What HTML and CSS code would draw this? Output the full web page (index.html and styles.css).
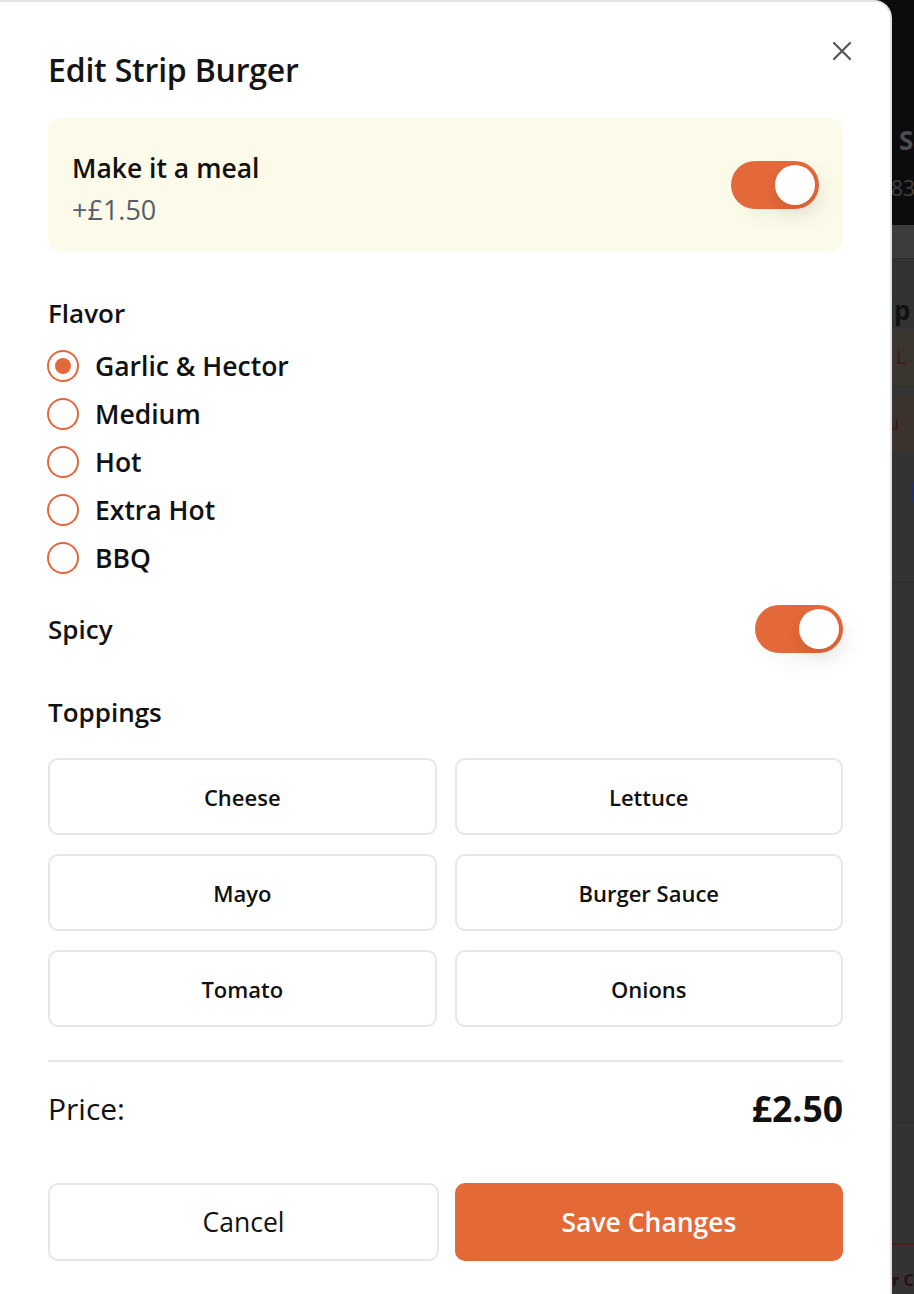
FILE: index.html
```html
<!DOCTYPE html>
<html lang="en">
<head>
<meta charset="utf-8">
<title>Edit Strip Burger</title>
<link rel="stylesheet" href="styles.css">
</head>
<body>
<div class="page" aria-hidden="true">
  <header class="page-header">
    <div class="brand">S</div>
    <div class="phone">83</div>
  </header>
  <div class="page-band"></div>
  <section class="page-item">
    <div class="item-name">ip</div>
    <div class="tag tag-a">L</div>
    <div class="tag tag-b">au</div>
    <div class="check"></div>
  </section>
  <section class="page-summary"></section>
  <footer class="page-footer">r C</footer>
</div>

<div class="modal" role="dialog" aria-labelledby="modal-title">
  <button class="close" aria-label="Close">
    <svg width="20" height="20" viewBox="0 0 20 20"><path d="M2 2L18 18M18 2L2 18" stroke="#555" stroke-width="2.2" stroke-linecap="round"/></svg>
  </button>
  <h2 id="modal-title" class="title">Edit Strip Burger</h2>

  <div class="meal">
    <div class="meal-text">
      <div class="meal-name">Make it a meal</div>
      <div class="meal-price">+£1.50</div>
    </div>
    <span class="toggle on"><span class="knob"></span></span>
  </div>

  <div class="label flavor-label">Flavor</div>
  <div class="radios">
    <label class="radio"><span class="dot checked"></span>Garlic &amp; Hector</label>
    <label class="radio"><span class="dot"></span>Medium</label>
    <label class="radio"><span class="dot"></span>Hot</label>
    <label class="radio"><span class="dot"></span>Extra Hot</label>
    <label class="radio"><span class="dot"></span>BBQ</label>
  </div>

  <div class="spicy-row">
    <span class="label">Spicy</span>
    <span class="toggle on"><span class="knob"></span></span>
  </div>

  <div class="label toppings-label">Toppings</div>
  <div class="toppings">
    <button class="topping">Cheese</button>
    <button class="topping">Lettuce</button>
    <button class="topping">Mayo</button>
    <button class="topping">Burger Sauce</button>
    <button class="topping">Tomato</button>
    <button class="topping">Onions</button>
  </div>

  <hr class="divider">

  <div class="price-row">
    <span class="price-label">Price:</span>
    <span class="price-value">£2.50</span>
  </div>

  <div class="actions">
    <button class="btn btn-cancel">Cancel</button>
    <button class="btn btn-save">Save Changes</button>
  </div>
</div>
</body>
</html>
```

FILE: styles.css
```css
* { box-sizing: border-box; }

html, body {
  margin: 0;
  padding: 0;
}

body {
  width: 914px;
  height: 1294px;
  overflow: hidden;
  background: #333333;
  font-family: "Open Sans", "Noto Sans", sans-serif;
  color: #111111;
  position: relative;
}

/* ---------- background page (dimmed) ---------- */
.page {
  width: 914px;
}

.page-header {
  height: 225px;
  background: #0c0c0e;
  padding: 124px 0 0 899px;
  white-space: nowrap;
  color: #4d4d4f;
}

.brand {
  font-size: 26px;
  font-weight: 700;
  line-height: 32px;
}

.phone {
  font-size: 21px;
  line-height: 28px;
  margin-top: 18px;
  margin-left: -8px;
  color: #404042;
}

.page-band {
  height: 34px;
  background: #3c3c3c;
  border-bottom: 1px solid #2c2c2c;
}

.page-item {
  height: 324px;
  padding: 34px 0 0 886px;
  white-space: nowrap;
  border-bottom: 1px solid #2a2a2a;
}

.item-name {
  font-size: 26px;
  font-weight: 700;
  color: #111111;
  line-height: 34px;
}

.tag {
  height: 56px;
  line-height: 56px;
  font-size: 20px;
  margin-left: -10px;
}

.tag-a {
  margin-top: 2px;
  background: #3b3530;
  color: #3a1a10;
  padding-left: 20px;
}

.tag-b {
  margin-top: 10px;
  background: #3a332e;
  color: #3a1a10;
  padding-left: 0;
}

.check {
  width: 22px;
  height: 22px;
  border: 2px solid #25305a;
  border-radius: 3px;
  margin: 30px 0 0 26px;
}

.page-summary {
  height: 540px;
  border-bottom: 1px solid #2a2a2a;
}

.page-footer {
  margin-top: 120px;
  border-top: 2px solid #4a1e1e;
  padding: 24px 0 0 892px;
  font-size: 16px;
  font-weight: 700;
  color: #2a0e0e;
  white-space: nowrap;
}

/* ---------- modal ---------- */
.modal {
  position: absolute;
  top: 0;
  left: 0;
  width: 892px;
  height: 1300px;
  background: #ffffff;
  border-top: 2px solid #e4e4e4;
  border-right: 2px solid #e4e4e4;
  border-radius: 0 18px 0 0;
  padding: 48px 47px 0 48px;
}

.close {
  position: absolute;
  top: 37px;
  right: 36px;
  width: 24px;
  height: 24px;
  padding: 0;
  border: 0;
  background: none;
  display: flex;
  align-items: center;
  justify-content: center;
}

.title {
  margin: 0;
  font-size: 32px;
  font-weight: 600;
  line-height: 40px;
  letter-spacing: -0.2px;
  color: #141414;
}

.meal {
  margin-top: 28px;
  height: 134px;
  background: #fcfbea;
  border-radius: 14px;
  padding: 0 24px;
  display: flex;
  align-items: center;
  justify-content: space-between;
}

.meal-text {
  display: flex;
  flex-direction: column;
  gap: 6px;
  padding-top: 8px;
}

.meal-name {
  font-size: 26.5px;
  font-weight: 600;
  line-height: 36px;
}

.meal-price {
  font-size: 27px;
  line-height: 36px;
  color: #575d69;
}

.toggle {
  width: 88px;
  height: 48px;
  border-radius: 24px;
  background: #e3683a;
  display: flex;
  align-items: center;
  justify-content: flex-end;
  padding: 4px;
  flex: none;
  box-shadow: 10px 10px 20px rgba(0, 0, 0, 0.04);
}

.knob {
  width: 40px;
  height: 40px;
  border-radius: 50%;
  background: #ffffff;
  box-shadow: 0 8px 16px rgba(0, 0, 0, 0.08);
}

.label {
  font-size: 26px;
  font-weight: 600;
  line-height: 36px;
}

.flavor-label {
  margin-top: 43px;
}

.radios {
  margin-top: 11px;
  display: flex;
  flex-direction: column;
}

.radio {
  height: 48px;
  display: flex;
  align-items: center;
  gap: 16px;
  font-size: 26.5px;
  font-weight: 600;
}

.dot {
  width: 32px;
  height: 32px;
  border-radius: 50%;
  border: 2px solid #e3683a;
  flex: none;
  display: flex;
  align-items: center;
  justify-content: center;
  margin-left: -1px;
}

.dot.checked::after {
  content: "";
  width: 16px;
  height: 16px;
  border-radius: 50%;
  background: #e3683a;
}

.spicy-row {
  margin-top: 23px;
  height: 48px;
  display: flex;
  align-items: center;
  justify-content: space-between;
}

.toppings-label {
  margin-top: 41px;
}

.toppings {
  margin-top: 28px;
  display: grid;
  grid-template-columns: 1fr 1fr;
  gap: 19px 18px;
}

.topping {
  height: 77px;
  border: 2px solid #e6e6e6;
  border-radius: 10px;
  background: #ffffff;
  font-family: inherit;
  font-size: 22px;
  font-weight: 600;
  color: #111111;
}

.divider {
  margin: 33px 0 0;
  border: 0;
  height: 2px;
  background: #e6e6e6;
}

.price-row {
  margin-top: 26px;
  height: 40px;
  display: flex;
  align-items: center;
  justify-content: space-between;
}

.price-label {
  font-size: 30px;
  font-weight: 500;
}

.price-value {
  font-size: 35.5px;
  font-weight: 700;
}

.actions {
  margin-top: 55px;
  display: grid;
  grid-template-columns: 391px 1fr;
  gap: 16px;
}

.btn {
  height: 78px;
  border-radius: 10px;
  font-family: inherit;
  font-size: 26.5px;
  font-weight: 500;
}

.btn-cancel {
  background: #ffffff;
  border: 2px solid #e6e6e6;
  color: #111111;
}

.btn-save {
  background: #e36936;
  border: 0;
  color: #ffffff;
  font-weight: 600;
}
```
